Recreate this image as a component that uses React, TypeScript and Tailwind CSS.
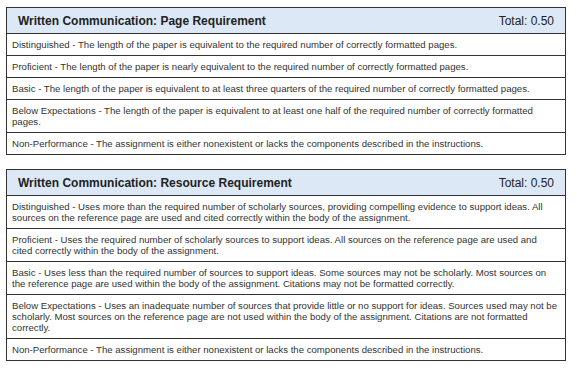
import React from 'react';

type Criterion = {
  title: string;
  total: string;
  ratings: string[];
};

const CRITERIA: Criterion[] = [
  {
    title: 'Written Communication: Page Requirement',
    total: 'Total: 0.50',
    ratings: [
      'Distinguished - The length of the paper is equivalent to the required number of correctly formatted pages.',
      'Proficient - The length of the paper is nearly equivalent to the required number of correctly formatted pages.',
      'Basic - The length of the paper is equivalent to at least three quarters of the required number of correctly formatted pages.',
      'Below Expectations - The length of the paper is equivalent to at least one half of the required number of correctly formatted pages.',
      'Non-Performance - The assignment is either nonexistent or lacks the components described in the instructions.',
    ],
  },
  {
    title: 'Written Communication: Resource Requirement',
    total: 'Total: 0.50',
    ratings: [
      'Distinguished - Uses more than the required number of scholarly sources, providing compelling evidence to support ideas. All sources on the reference page are used and cited correctly within the body of the assignment.',
      'Proficient - Uses the required number of scholarly sources to support ideas. All sources on the reference page are used and cited correctly within the body of the assignment.',
      'Basic - Uses less than the required number of sources to support ideas. Some sources may not be scholarly. Most sources on the reference page are used within the body of the assignment. Citations may not be formatted correctly.',
      'Below Expectations - Uses an inadequate number of sources that provide little or no support for ideas. Sources used may not be scholarly. Most sources on the reference page are not used within the body of the assignment. Citations are not formatted correctly.',
      'Non-Performance - The assignment is either nonexistent or lacks the components described in the instructions.',
    ],
  },
];

function CriterionTable({ c }: { c: Criterion }) {
  return (
    <div className="w-[560px] border border-[#333]">
      <div className="flex items-center justify-between bg-[#dce8f5] px-[11px] h-[26px] border-b border-[#333]">
        <span className="text-[12px] font-bold text-[#222]">{c.title}</span>
        <span className="text-[12px] text-[#222]">{c.total}</span>
      </div>
      {c.ratings.map((r, i) => (
        <div
          key={i}
          className={
            'pl-[5px] pr-[6px] py-[5px] text-[9.6px] leading-[11px] text-[#333] ' +
            (i < c.ratings.length - 1 ? 'border-b border-[#333]' : '')
          }
        >
          {r}
        </div>
      ))}
    </div>
  );
}

export default function App() {
  return (
    <div
      className="min-h-[372px] bg-white pl-[6px] pt-[7px] flex flex-col gap-[14px]"
      style={{ fontFamily: '"Liberation Sans", Arial, sans-serif' }}
    >
      {CRITERIA.map((c) => (
        <CriterionTable key={c.title} c={c} />
      ))}
    </div>
  );
}
